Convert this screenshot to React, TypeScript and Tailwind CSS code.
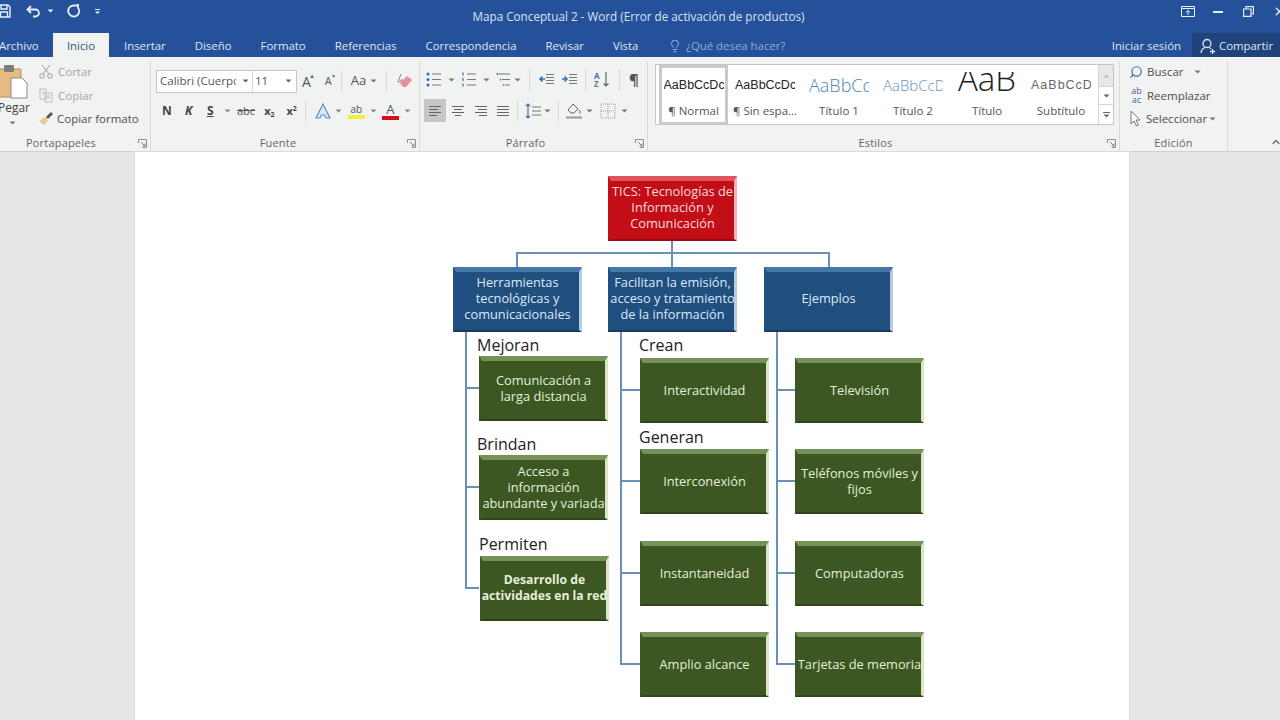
import type { ReactNode } from "react";
import { ChevronUp, Lightbulb, Search, X } from "lucide-react";

const UI_FONT = "font-['Open_Sans',sans-serif]";

function Caret({ className = "" }: { className?: string }) {
  return (
    <svg width="7" height="4" viewBox="0 0 7 4" className={className}>
      <path d="M0.5 0.5h6L3.5 3.5z" fill="currentColor" />
    </svg>
  );
}

function Launcher() {
  return (
    <svg width="9" height="9" viewBox="0 0 9 9" className="text-[#777]">
      <path d="M0.5 4V0.5H8.5V8.5H5" fill="none" stroke="currentColor" strokeWidth="0.8" />
      <path d="M3 3l4 4M4.5 7H7V4.5" fill="none" stroke="currentColor" strokeWidth="0.9" />
    </svg>
  );
}

function Group({ width, label, launcher = true, shift, children }: { width: string; label: string; launcher?: boolean; shift: string; children: ReactNode }) {
  return (
    <div className={`${width} relative shrink-0 flex flex-col border-r border-[#d9dcdc]`}>
      <div className="flex-1 min-h-0">{children}</div>
      <div className={`h-[18px] pt-[2px] flex items-center justify-center text-[11px] text-[#666] tracking-[0.2px] ${shift}`}>
        <span>{label}</span>
      </div>
      {launcher && (
        <span className="absolute right-[3px] bottom-[3px] leading-none">
          <Launcher />
        </span>
      )}
    </div>
  );
}

function LinesIcon({ align }: { align: "left" | "center" | "right" | "justify" }) {
  const rows = {
    left: [[1, 13], [1, 10], [1, 13], [1, 9]],
    center: [[1, 13], [3, 11], [1, 13], [4, 10]],
    right: [[1, 13], [4, 13], [1, 13], [5, 13]],
    justify: [[1, 13], [1, 13], [1, 13], [1, 13]],
  }[align];
  return (
    <svg width="14" height="12" viewBox="0 0 14 12" className="text-[#666]">
      {rows.map(([a, b], i) => (
        <path key={i} d={`M${a} ${1.5 + i * 3}H${b}`} stroke="currentColor" strokeWidth="1" />
      ))}
    </svg>
  );
}

function BulletIcon({ kind }: { kind: "dot" | "num" | "multi" }) {
  return (
    <svg width="16" height="15" viewBox="0 0 16 15">
      {kind === "multi" ? (
        <>
          <path d="M3 2h11M6 7.5h8M9 13h5" stroke="#777" strokeWidth="1" />
          <circle cx="1.5" cy="2" r="1" fill="#2f6fb5" />
          <circle cx="4.5" cy="7.5" r="0.9" fill="#888" />
          <circle cx="7.5" cy="13" r="0.9" fill="#888" />
        </>
      ) : (
        [2, 7.5, 13].map((y) => (
          <g key={y}>
            <path d={`M6 ${y}H15`} stroke="#777" strokeWidth="1" />
            {kind === "dot" ? (
              <circle cx="2" cy={y} r="1.5" fill="#2f6fb5" />
            ) : (
              <path d={`M2 ${y - 1.5}v3`} stroke="#2f6fb5" strokeWidth="1.2" />
            )}
          </g>
        ))
      )}
    </svg>
  );
}

function IndentIcon({ right }: { right?: boolean }) {
  return (
    <svg width="17" height="13" viewBox="0 0 17 13">
      <path d="M8 1.5h8M8 4.5h8M8 7.5h8M8 10.5h8" stroke="#777" strokeWidth="1" />
      <path d={right ? "M1 6h4M3.5 3.5L6 6l-2.500 2.500" : "M7 6H2M4.500 3.500L2 6l2.500 2.500"} fill="none" stroke="#2f6fb5" strokeWidth="1.5" />
    </svg>
  );
}

function GalleryItem({ sample, name, selected, sampleClass, boxClass = "h-[35px] items-center" }: { sample: string; name: string; selected?: boolean; sampleClass: string; boxClass?: string }) {
  return (
    <div className={`shrink-0 h-[60px] flex flex-col items-center overflow-hidden ${selected ? "w-[69px] border-[3px] border-[#c9c9c9]" : "w-[74px] border-[3px] border-white"}`}>
      <div className={`w-full flex justify-center overflow-hidden ${boxClass}`}>
        <span className={`block whitespace-nowrap overflow-hidden max-w-[60px] ${sampleClass}`}>{sample}</span>
      </div>
      <div className="text-[11.5px] leading-[16px] text-[#555] whitespace-nowrap">{name}</div>
    </div>
  );
}

const BLUE_NODE = "pb-[2px] bg-[#1f4e7f] border-t-[#4577a8] border-r-[#b4cde4] border-b-[#173c62] border-l-[#1f4e7f] text-[#dfe9f3]";
const GREEN_NODE = "bg-[#3c5722] border-t-[#759358] border-r-[#dbe6c8] border-b-[#2f4619] border-l-[#3c5722] text-[#e6eeda]";
const RED_NODE = "pb-[2px] bg-[#c30d17] border-t-[#e0555b] border-r-[#f2b4b6] border-b-[#960a10] border-l-[#c30d17] text-[#f6dcdc]";

type DiagramNode = { text: string; x: string; y: string; tone: string; bold?: boolean };

// positions on the page canvas, offsets measured from the page's corner (135,152)
const NODES: DiagramNode[] = [
  { text: "TICS: Tecnologías de\nInformación y\nComunicación", x: "left-[473px]", y: "top-[24px]", tone: RED_NODE },
  { text: "Herramientas\ntecnológicas y\ncomunicacionales", x: "left-[318px]", y: "top-[115px]", tone: BLUE_NODE },
  { text: "Facilitan la emisión,\nacceso y tratamiento\nde la información", x: "left-[473px]", y: "top-[115px]", tone: BLUE_NODE },
  { text: "Ejemplos", x: "left-[629px]", y: "top-[115px]", tone: BLUE_NODE },
  { text: "Comunicación a\nlarga distancia", x: "left-[344px]", y: "top-[204px]", tone: GREEN_NODE },
  { text: "Acceso a\ninformación\nabundante y variada", x: "left-[344px]", y: "top-[303px]", tone: GREEN_NODE },
  { text: "Desarrollo de\nactividades en la red", x: "left-[345px]", y: "top-[404px]", tone: GREEN_NODE, bold: true },
  { text: "Interactividad", x: "left-[505px]", y: "top-[206px]", tone: GREEN_NODE },
  { text: "Interconexión", x: "left-[505px]", y: "top-[297px]", tone: GREEN_NODE },
  { text: "Instantaneidad", x: "left-[505px]", y: "top-[389px]", tone: GREEN_NODE },
  { text: "Amplio alcance", x: "left-[505px]", y: "top-[480px]", tone: GREEN_NODE },
  { text: "Televisión", x: "left-[660px]", y: "top-[206px]", tone: GREEN_NODE },
  { text: "Teléfonos móviles y\nfijos", x: "left-[660px]", y: "top-[297px]", tone: GREEN_NODE },
  { text: "Computadoras", x: "left-[660px]", y: "top-[389px]", tone: GREEN_NODE },
  { text: "Tarjetas de memoria", x: "left-[660px]", y: "top-[480px]", tone: GREEN_NODE },
];

const LABELS = [
  { text: "Mejoran", pos: "left-[342px] top-[181px]" },
  { text: "Crean", pos: "left-[504px] top-[181px]" },
  { text: "Generan", pos: "left-[504px] top-[273px]" },
  { text: "Brindan", pos: "left-[342px] top-[280px]" },
  { text: "Permiten", pos: "left-[344px] top-[380px]" },
];

function Connectors() {
  return (
    <svg width="994" height="568" className="absolute left-0 top-0" fill="none" stroke="#6890b8" strokeWidth="2">
      <path d="M537 88V101M382 115V101H694V115M537 101V115" />
      <path d="M331 179V436H344M331 236H344M331 335H344" />
      <path d="M486 179V512H505M486 238H505M486 329H505M486 421H505" />
      <path d="M642 179V512H660M642 238H660M642 329H660M642 421H660" />
    </svg>
  );
}

export default function App() {
  return (
    <div className={`w-[1280px] h-[720px] overflow-hidden flex flex-col bg-[#e6e6e6] ${UI_FONT}`}>
      {/* title bar */}
      <div className="relative h-[33px] shrink-0 bg-[#25519b] flex items-start pt-[4px] text-[#e8eef7]">
        <div className="flex items-center -ml-[3px]">
          <svg width="14" height="14" viewBox="0 0 14 14" fill="none" stroke="currentColor" strokeWidth="1.4">
            <path d="M1 1h10l2 2v10H1zM4 1v4h6V1M3.5 13V8h7v5" />
          </svg>
          <svg width="16" height="14" viewBox="0 0 16 14" fill="none" stroke="currentColor" strokeWidth="1.8" className="ml-[15px]">
            <path d="M5 2L1.5 5.5 5 9M2 5.5h7.500a3.500 3.500 0 0 1 0 7H7" />
          </svg>
          <Caret className="ml-[5px]" />
          <svg width="14" height="14" viewBox="0 0 14 14" fill="none" stroke="currentColor" strokeWidth="1.8" className="ml-[13px]">
            <path d="M10.5 3a5.500 5.500 0 1 1-4-1.500H11M11 0v4" />
          </svg>
          <svg width="7" height="7" viewBox="0 0 7 7" fill="currentColor" className="ml-[13px]">
            <path d="M1 1h5v1H1zM1 3.500h5L3.500 6z" />
          </svg>
        </div>
        <div className="absolute left-0 w-[1277px] top-[8px] text-center text-[11.7px] leading-[17px] text-[#d9e3f1]">
          Mapa Conceptual 2 - Word (Error de activación de productos)
        </div>
        <div className="ml-auto flex items-center gap-[16px] -mr-[6px] pt-[1px]">
          <svg width="14" height="11" viewBox="0 0 14 11" fill="none" stroke="currentColor" strokeWidth="1">
            <path d="M0.5 0.5h13v10h-13zM0.5 2.5h13M7 9V4.500M5 6.500l2-2 2 2" />
          </svg>
          <div className="w-[10px] h-[2px] bg-current ml-[2px]" />
          <svg width="11" height="11" viewBox="0 0 11 11" fill="none" stroke="currentColor" strokeWidth="1.2" className="ml-[4px]">
            <path d="M0.6 3h7.400v7.400H0.6zM3 3V0.6h7.400V8H8" />
          </svg>
          <X size={13} strokeWidth={2.4} className="ml-[3px]" />
        </div>
      </div>

      {/* tabs */}
      <div className="h-[24px] shrink-0 bg-[#25519b] flex items-stretch text-[11.4px] text-[#dfe7f3]">
        <div className="w-[54px] -ml-[1px] flex items-center pt-[2px]">Archivo</div>
        <div className="w-[56px] bg-[#f1f2f2] text-[#35527f] flex items-center justify-center pt-[1px]">Inicio</div>
        <div className="w-[495px] flex items-center gap-[29px] pl-[15px] pt-[1px] whitespace-nowrap">
          <span>Insertar</span>
          <span>Diseño</span>
          <span>Formato</span>
          <span>Referencias</span>
          <span>Correspondencia</span>
          <span>Revisar</span>
          <span>Vista</span>
        </div>
        <div className="flex items-center text-[#8dadd8] whitespace-nowrap ml-[64px] pt-[1px]">
          <Lightbulb size={14} strokeWidth={1.3} className="mr-[4px] text-[#c3d4ea]" />
          ¿Qué desea hacer?
        </div>
        <div className="ml-auto flex items-stretch whitespace-nowrap">
          <div className="flex items-center pr-[11px] pt-[1px]">Iniciar sesión</div>
          <div className="w-[88px] bg-[#1f437a] flex items-center pl-[8px] pt-[1px]">
            <svg width="16" height="16" viewBox="0 0 16 16" fill="none" stroke="currentColor" strokeWidth="1.3" className="mr-[3px]">
              <circle cx="7" cy="5.500" r="4" />
              <path d="M1 15c0.500-3 2.500-5 4-5.500M9 9.500c1 0.300 1.600 0.800 2 1.500M10 13.500h5M12.500 11v5" />
            </svg>
            Compartir
          </div>
        </div>
      </div>

      {/* ribbon */}
      <div className="h-[95px] shrink-0 bg-[#f1f2f2] border-b border-[#cfd1d1] flex items-stretch pt-[4px] text-[#555]">
        <Group width="w-[151px]" label="Portapapeles" shift="pr-[28px]">
          <div className="relative h-full flex">
            <div className="w-[38px] -ml-[7px] flex flex-col items-center shrink-0">
              <svg width="32" height="36" viewBox="0 0 32 36" className="mt-[3px]">
                <rect x="1" y="5" width="24" height="28" rx="1" fill="#e5bd82" stroke="#b08f5e" />
                <rect x="8" y="1" width="10" height="7" rx="1" fill="#7d7d7d" />
                <path d="M15 14h11l5 5v15H15z" fill="#fff" stroke="#8a8a8a" />
              </svg>
              <span className="text-[12px] leading-[14px] ml-[4px] mt-[1px] text-[#444]">Pegar</span>
              <Caret className="mt-[6px] text-[#777]" />
            </div>
            <div className="flex flex-col text-[11.5px] leading-[23.5px] -mt-[1px] ml-[8px] whitespace-nowrap">
              <div className="flex items-center gap-[5px] text-[#a5a5a5]">
                <svg width="14" height="15" viewBox="0 0 14 15" fill="none" stroke="#aaa" strokeWidth="1.1">
                  <path d="M3 1l7 9M11 1l-7 9" />
                  <circle cx="3" cy="12" r="2.200" />
                  <circle cx="11" cy="12" r="2.200" />
                </svg>
                Cortar
              </div>
              <div className="flex items-center gap-[5px] text-[#a5a5a5]">
                <svg width="14" height="15" viewBox="0 0 14 15" fill="none" stroke="#bbb" strokeWidth="1">
                  <path d="M1 1h6v10H1zM6 5h7v9H6zM8 8h3M8 10h3M3 4h2M3 6h2" />
                </svg>
                Copiar
              </div>
              <div className="flex items-center gap-[3px] text-[#4d4d4d] -ml-[1px]">
                <svg width="16" height="15" viewBox="0 0 16 15">
                  <path d="M1 10l6-4 3 4-4 4z" fill="#edc889" />
                  <path d="M8 6l5-5 2 2-5 5z" fill="#555" />
                </svg>
                Copiar formato
              </div>
            </div>
          </div>
        </Group>

        <Group width="w-[269px]" label="Fuente" shift="pr-[14px]">
          <div className="pl-[5px] pt-[8px]">
            <div className="flex items-center h-[24px]">
              <div className="flex h-[23px] border border-[#c6c6c6] bg-white text-[11.5px] text-[#555] items-center">
                <div className="w-[96px] flex items-center px-[3px] border-r border-[#d6d6d6] h-full overflow-hidden whitespace-nowrap">
                  <span className="w-[78px] overflow-hidden">Calibri (Cuerpo</span>
                  <Caret className="ml-[6px] shrink-0 text-[#666]" />
                </div>
                <div className="w-[43px] flex items-center pl-[2px]">
                  11
                  <Caret className="ml-auto mr-[4px] text-[#666]" />
                </div>
              </div>
              <span className="ml-[5px] text-[14px] text-[#555] relative">A<span className="text-[6px] text-[#2f6fb5] absolute -right-[4px] top-[1px]">▲</span></span>
              <span className="ml-[14px] text-[11px] text-[#555] relative">A<span className="text-[5px] text-[#2f6fb5] absolute -right-[4px] top-[0px]">▼</span></span>
              <div className="w-px h-[22px] bg-[#dcdcdc] ml-[9px]" />
              <span className="ml-[9px] text-[13px] text-[#555]">Aa</span>
              <Caret className="ml-[4px] text-[#777]" />
              <div className="w-px h-[22px] bg-[#dcdcdc] ml-[9px]" />
              <svg width="16" height="16" viewBox="0 0 16 16" className="ml-[10px]">
                <path d="M4 1l-3 8h2l1-2h2" fill="none" stroke="#888" strokeWidth="1" />
                <path d="M3 10l7-7 5 4-6 7H6z" fill="#e88e9c" />
              </svg>
            </div>
            <div className="flex items-center h-[24px] mt-[6px] text-[#444]">
              <span className="ml-[6px] w-[23px] text-[12px] font-bold">N</span>
              <span className="w-[22px] text-[12px] font-bold italic">K</span>
              <span className="w-[16px] text-[12px] font-bold underline">S</span>
              <Caret className="text-[#888] ml-[1px]" />
              <span className="ml-[6px] text-[11px] line-through text-[#555]">abc</span>
              <span className="ml-[9px] text-[11px] font-bold">x<sub className="text-[7px]">2</sub></span>
              <span className="ml-[12px] text-[11px] font-bold">x<sup className="text-[7px]">2</sup></span>
              <div className="w-px h-[22px] bg-[#dcdcdc] ml-[8px]" />
              <svg width="18" height="18" viewBox="0 0 18 18" className="ml-[8px]" fill="none">
                <path d="M9 2L2 16h4l1.500-3h3l1.500 3h4z" fill="#dce8f5" stroke="#5c8fca" strokeWidth="1.2" />
              </svg>
              <Caret className="ml-[3px] text-[#888]" />
              <div className="ml-[6px] flex flex-col items-center w-[17px]">
                <span className="text-[10px] leading-[11px] text-[#555]">ab</span>
                <div className="w-[17px] h-[4px] bg-[#f5ee3a]" />
              </div>
              <Caret className="ml-[5px] text-[#888]" />
              <div className="ml-[5px] flex flex-col items-center w-[17px]">
                <span className="text-[13px] leading-[13px] text-[#555]">A</span>
                <div className="w-[17px] h-[4px] bg-[#d4101c]" />
              </div>
              <Caret className="ml-[5px] text-[#888]" />
            </div>
          </div>
        </Group>

        <Group width="w-[228px]" label="Párrafo" shift="pr-[16px]">
          <div className="pl-[6px] pt-[7px]">
            <div className="flex items-center h-[23px]">
              <BulletIcon kind="dot" />
              <Caret className="ml-[6px] text-[#777]" />
              <span className="ml-[6px]"><BulletIcon kind="num" /></span>
              <Caret className="ml-[6px] text-[#777]" />
              <span className="ml-[6px]"><BulletIcon kind="multi" /></span>
              <Caret className="ml-[2px] text-[#777]" />
              <div className="w-px h-[22px] bg-[#dcdcdc] ml-[8px]" />
              <span className="ml-[8px]"><IndentIcon /></span>
              <span className="ml-[6px]"><IndentIcon right /></span>
              <div className="w-px h-[22px] bg-[#dcdcdc] ml-[7px]" />
              <svg width="16" height="17" viewBox="0 0 16 17" className="ml-[8px]">
                <text x="0" y="8" fontSize="8" fontWeight="700" fill="#2f6fb5">A</text>
                <text x="0" y="16" fontSize="8" fontWeight="700" fill="#777">Z</text>
                <path d="M12 1v14M9.500 12.500L12 15l2.500-2.500" fill="none" stroke="#666" strokeWidth="1.2" />
              </svg>
              <div className="w-px h-[22px] bg-[#dcdcdc] ml-[9px]" />
              <span className="ml-[9px] text-[15px] font-bold text-[#555]">¶</span>
            </div>
            <div className="flex items-center h-[23px] mt-[8px] -ml-[2px]">
              <div className="w-[22px] h-[23px] bg-[#c6c6c6] flex items-center justify-center"><LinesIcon align="left" /></div>
              <div className="w-[24px] flex justify-center"><LinesIcon align="center" /></div>
              <div className="w-[22px] flex justify-center"><LinesIcon align="right" /></div>
              <div className="w-[22px] flex justify-center"><LinesIcon align="justify" /></div>
              <div className="w-px h-[22px] bg-[#dcdcdc] ml-[3px]" />
              <svg width="16" height="16" viewBox="0 0 16 16" className="ml-[7px]" fill="none">
                <path d="M3 1v14M1 3l2-2 2 2M1 13l2 2 2-2" stroke="#2f6fb5" strokeWidth="1.1" />
                <path d="M7 4h9M7 8h9M7 12h9" stroke="#777" />
              </svg>
              <Caret className="ml-[3px] text-[#777]" />
              <div className="w-px h-[22px] bg-[#dcdcdc] ml-[7px]" />
              <svg width="18" height="17" viewBox="0 0 18 17" className="ml-[6px]" fill="none">
                <path d="M3 8l5-6 5 5-4 4H6z" stroke="#666" />
                <path d="M14 8c1.500 2 1.500 3 0 3.500" stroke="#c79b3d" strokeWidth="1.5" />
                <path d="M1 15.500h16" stroke="#999" strokeWidth="2" />
              </svg>
              <Caret className="ml-[3px] text-[#777]" />
              <svg width="16" height="16" viewBox="0 0 16 16" className="ml-[7px]" fill="none" stroke="#999" strokeDasharray="1 1">
                <path d="M1 1h14v14H1zM8 1v14M1 8h14" />
              </svg>
              <Caret className="ml-[5px] text-[#777]" />
            </div>
          </div>
        </Group>

        <Group width="w-[472px]" label="Estilos" shift="pr-[16px]">
          <div className="flex h-[61px] mt-[3px] ml-[7px] w-[459px] border border-[#c6c6c6] bg-white">
            <div className="flex pl-[3px] w-[442px] overflow-hidden">
              <GalleryItem selected sample="AaBbCcDc" name="¶ Normal" sampleClass="font-['Liberation_Sans',sans-serif] text-[12.5px] text-[#222]" />
              <GalleryItem sample="AaBbCcDc" name="¶ Sin espa..." sampleClass="font-['Liberation_Sans',sans-serif] text-[12.5px] text-[#222]" />
              <GalleryItem sample="AaBbCc" name="Título 1" sampleClass="text-[18px] font-light text-[#4d84ba]" />
              <GalleryItem sample="AaBbCcD" name="Título 2" sampleClass="text-[15px] font-light text-[#5d93c4]" />
              <GalleryItem sample="AaB" name="Título" boxClass="h-[31px] mt-[4px] items-start" sampleClass="text-[33px] font-light text-[#222] leading-[16px] h-[23px] -mt-[1px]" />
              <GalleryItem sample="AaBbCcD" name="Subtítulo" sampleClass="font-['Liberation_Sans',sans-serif] text-[12.5px] tracking-[1px] text-[#666]" />
            </div>
            <div className="w-[15px] ml-auto flex flex-col border-l border-[#d6d6d6] text-[#666]">
              <div className="h-[21px] bg-[#e7e7e7] flex items-center justify-center text-[#bbb]"><Caret className="rotate-180" /></div>
              <div className="h-[19px] border-y border-[#d6d6d6] flex items-center justify-center"><Caret /></div>
              <div className="flex-1 flex flex-col items-center justify-center gap-[1px]">
                <div className="w-[7px] h-px bg-current" />
                <Caret />
              </div>
            </div>
          </div>
        </Group>

        <Group width="w-[108px]" label="Edición" launcher={false} shift="pr-0">
          <div className="flex flex-col pl-[9px] -mt-[1px] text-[11.5px] leading-[23.5px] whitespace-nowrap text-[#4d4d4d]">
            <div className="flex items-center gap-[4px]">
              <Search size={14} strokeWidth={2} className="text-[#3a6ea8] -scale-x-100" />
              Buscar
              <Caret className="ml-[6px] text-[#777]" />
            </div>
            <div className="flex items-center gap-[2px] -ml-[1px]">
              <span className="w-[17px] text-[9px] leading-[9px] text-center">
                <span className="block text-[#7b3fa0]">ab</span>
                <span className="block text-[#2f6fb5]">ac</span>
              </span>
              Reemplazar
            </div>
            <div className="flex items-center gap-[5px]">
              <svg width="12" height="17" viewBox="0 0 12 17" fill="#fafafa" stroke="#777" strokeWidth="1">
                <path d="M2 1v13l3-3 2.500 5 2-1-2.500-5h4z" />
              </svg>
              Seleccionar
              <Caret className="-ml-[3px] text-[#777]" />
            </div>
          </div>
        </Group>

        <div className="flex-1 relative">
          <ChevronUp size={12} strokeWidth={2.4} className="absolute right-[-2px] bottom-[3px] text-[#666]" />
        </div>
      </div>

      {/* document page */}
      <div className="flex-1 min-h-0 pl-[135px]">
        <div className="relative w-[994px] h-full bg-white overflow-hidden shadow-[0_0_0_1px_#dadada]">
          <Connectors />
          {NODES.map((node) => (
            <div
              key={node.text}
              className={`absolute ${node.x} ${node.y} w-[129px] h-[65px] box-border border-t-[5px] border-r-[3px] border-b-[2px] border-l-[3px] flex items-center justify-center text-center leading-[16.2px] whitespace-pre-line ${node.tone} ${node.bold ? "font-bold text-[12.2px]" : "text-[12.8px]"}`}
            >
              <span className="-mx-[5px] block pb-[4px]">{node.text}</span>
            </div>
          ))}
          {LABELS.map((label) => (
            <div key={label.text} className={`absolute ${label.pos} text-[16px] leading-[24px] text-[#222]`}>
              {label.text}
            </div>
          ))}
        </div>
      </div>
    </div>
  );
}
